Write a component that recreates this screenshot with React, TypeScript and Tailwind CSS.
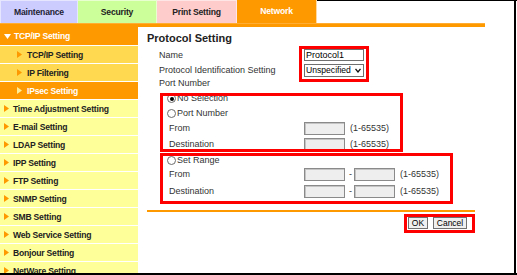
import React from "react";

const ArrowRight = ({ color }: { color: string }) => (
  <svg width="5" height="7" viewBox="0 0 5 7" className="shrink-0">
    <polygon points="0,0 5,3.5 0,7" fill={color} />
  </svg>
);

const ArrowDown = () => (
  <svg width="7" height="5" viewBox="0 0 7 5" className="shrink-0">
    <polygon points="0,0 7,0 3.5,5" fill="#ffffff" />
  </svg>
);

type Item = { label: string; kind: "header" | "sub" | "subActive" | "item" };

const items: Item[] = [
  { label: "TCP/IP Setting", kind: "header" },
  { label: "TCP/IP Setting", kind: "sub" },
  { label: "IP Filtering", kind: "sub" },
  { label: "IPsec Setting", kind: "subActive" },
  { label: "Time Adjustment Setting", kind: "item" },
  { label: "E-mail Setting", kind: "item" },
  { label: "LDAP Setting", kind: "item" },
  { label: "IPP Setting", kind: "item" },
  { label: "FTP Setting", kind: "item" },
  { label: "SNMP Setting", kind: "item" },
  { label: "SMB Setting", kind: "item" },
  { label: "Web Service Setting", kind: "item" },
  { label: "Bonjour Setting", kind: "item" },
  { label: "NetWare Setting", kind: "item" },
];

function SideRow({ item, first }: { item: Item; first: boolean }) {
  const base =
    "flex items-center h-[18px] shrink-0 text-[8.6px] tracking-[-0.22px] font-bold leading-[10px] whitespace-nowrap";
  const sep = first ? "" : " border-t border-white";
  if (item.kind === "header")
    return (
      <div className={base + sep + " bg-[#ff9900] text-white pl-[4px] gap-[3px]"}>
        <ArrowDown />
        <span>{item.label}</span>
      </div>
    );
  if (item.kind === "sub")
    return (
      <div className={base + sep + " bg-[#ffd94f] text-[#222222] pl-[17px] gap-[5px]"}>
        <ArrowRight color="#ff9900" />
        <span>{item.label}</span>
      </div>
    );
  if (item.kind === "subActive")
    return (
      <div className={base + sep + " bg-[#ff9900] text-white pl-[17px] gap-[5px]"}>
        <ArrowRight color="#ffee99" />
        <span>{item.label}</span>
      </div>
    );
  return (
    <div className={base + sep + " bg-[#ffff99] text-[#222222] pl-[4px] gap-[4px]"}>
      <ArrowRight color="#ff9900" />
      <span>{item.label}</span>
    </div>
  );
}

const Radio = ({ checked }: { checked?: boolean }) => (
  <div className="w-[9px] h-[9px] rounded-full border border-[#6b6b6b] bg-white flex items-center justify-center shrink-0">
    {checked && <div className="w-[4px] h-[4px] rounded-full bg-black" />}
  </div>
);

const DisInput = () => (
  <div className="w-[41px] h-[13px] border border-[#8a8a8a] bg-[#eeeeee] shadow-[inset_1px_1px_0_#c4c4c4] shrink-0" />
);

const tabText = "text-[8.6px] tracking-[-0.2px] font-bold";

export default function App() {
  return (
    <div className="relative w-[517px] h-[275px] overflow-hidden bg-white font-['Liberation_Sans',Arial,sans-serif] text-[#333333]">
      {/* tabs */}
      <div className="flex h-[23px]">
        <div className={"w-[78px] flex items-center justify-center bg-[#ccccff] border-r border-t border-l border-[#e6e6ff] text-[#222233] " + tabText}>
          Maintenance
        </div>
        <div className={"w-[79px] flex items-center justify-center bg-[#ccff99] border-r border-t border-[#e8ffd0] text-[#222222] " + tabText}>
          Security
        </div>
        <div className={"w-[80px] flex items-center justify-center bg-[#ffcccc] border-r border-t border-[#ffe6e6] text-[#222222] " + tabText}>
          Print Setting
        </div>
        <div className={"w-[80px] flex items-center justify-center bg-[#ff9900] border-r border-[#ffd9a0] text-white " + tabText}>
          Network
        </div>
        <div className="flex-1 border-t border-black" />
      </div>
      {/* orange band */}
      <div className="w-[485px] h-[4px] bg-[#ff9900] border-t border-[#ffad33]" />

      <div className="flex">
        {/* sidebar */}
        <div className="w-[138px] flex flex-col shrink-0">
          {items.map((it, i) => (
            <SideRow key={i} item={it} first={i === 0} />
          ))}
        </div>

        {/* main */}
        <div className="flex-1 flex flex-col pl-[9px] pt-[5px] text-[9px] leading-[11px]">
          <div className="h-[13px] text-[11px] leading-[13px] font-bold text-[#222222]">Protocol Setting</div>

          <div className="mt-[3px] h-[14px] flex items-center ml-[12px]">
            <div className="w-[145px]">Name</div>
            <div className="w-[60px] h-[12px] border border-[#6f6f6f] bg-white text-black text-[9px] leading-[10px] pl-[1px]">
              Protocol1
            </div>
          </div>
          <div className="mt-[1px] h-[15px] flex items-center ml-[12px]">
            <div className="w-[145px]">Protocol Identification Setting</div>
            <div className="w-[60px] h-[13px] border border-[#6f6f6f] bg-white text-black text-[8.6px] leading-[11px] pl-[1px] flex items-center justify-between pr-[2px] overflow-hidden">
              <span>Unspecified</span>
              <svg width="6" height="5" viewBox="0 0 6 5" className="shrink-0">
                <polyline points="0.5,0.8 3,4 5.5,0.8" fill="none" stroke="#111" strokeWidth="1.3" />
              </svg>
            </div>
          </div>
          <div className="h-[11px] flex items-center ml-[12px]">Port Number</div>

          <div className="mt-[3px] h-[13px] flex items-center ml-[20px] gap-[1px]">
            <Radio checked />
            <span>No Selection</span>
          </div>
          <div className="mt-[2px] h-[13px] flex items-center ml-[20px] gap-[1px]">
            <Radio />
            <span>Port Number</span>
          </div>
          <div className="mt-[1px] h-[14px] flex items-center ml-[22px]">
            <div className="w-[135px]">From</div>
            <DisInput />
            <span className="ml-[5px]">(1-65535)</span>
          </div>
          <div className="mt-[2px] h-[14px] flex items-center ml-[22px]">
            <div className="w-[135px]">Destination</div>
            <DisInput />
            <span className="ml-[5px]">(1-65535)</span>
          </div>

          <div className="mt-[3px] h-[12px] flex items-center ml-[20px] gap-[1px]">
            <Radio />
            <span>Set Range</span>
          </div>
          <div className="mt-[1px] h-[15px] flex items-center ml-[22px]">
            <div className="w-[135px]">From</div>
            <DisInput />
            <span className="ml-[4px]">-</span>
            <div className="ml-[2px]">
              <DisInput />
            </div>
            <span className="ml-[5px]">(1-65535)</span>
          </div>
          <div className="mt-[2px] h-[14px] flex items-center ml-[22px]">
            <div className="w-[135px]">Destination</div>
            <DisInput />
            <span className="ml-[4px]">-</span>
            <div className="ml-[2px]">
              <DisInput />
            </div>
            <span className="ml-[5px]">(1-65535)</span>
          </div>

          <div className="mt-[12px] w-[328px] h-[2px] bg-[#ff9900]" />

          <div className="mt-[5px] flex ml-[261px] gap-[5px]">
            <div className="w-[20px] h-[12px] border border-[#707070] bg-[#efefef] flex items-center justify-center text-[8.5px] leading-[10px] text-black">
              OK
            </div>
            <div className="w-[34px] h-[12px] border border-[#707070] bg-[#efefef] flex items-center justify-center text-[8.5px] leading-[10px] text-black">
              Cancel
            </div>
          </div>
        </div>
      </div>

      {/* annotation highlight boxes */}
      <div className="absolute left-[299px] top-[46px] w-[70px] h-[36px] border-[3px] border-[#ff0000]" />
      <div className="absolute left-[160px] top-[93px] w-[243px] h-[59px] border-[3px] border-[#ff0000]" />
      <div className="absolute left-[160px] top-[153px] w-[293px] h-[51px] border-[3px] border-[#ff0000]" />
      <div className="absolute left-[404px] top-[214px] w-[71px] h-[19px] border-[3px] border-[#ff0000]" />

      {/* screenshot frame */}
      <div className="absolute right-[1px] top-0 w-[2px] h-[275px] bg-black" />
      <div className="absolute left-0 bottom-0 w-[517px] h-[2px] bg-black" />
    </div>
  );
}
